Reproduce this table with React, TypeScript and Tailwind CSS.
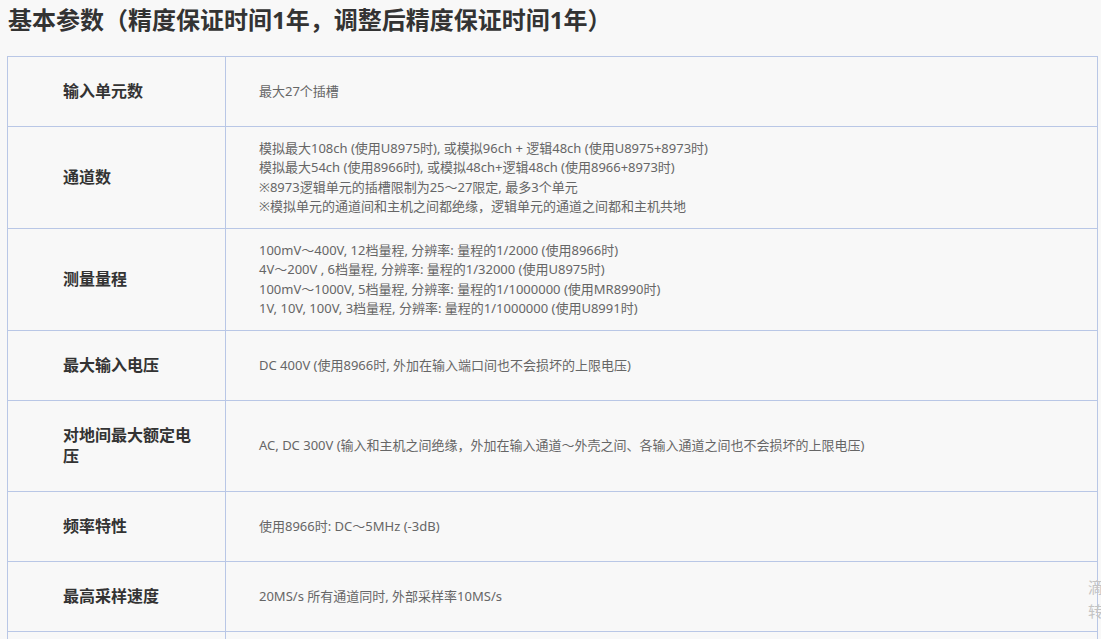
const rows: { name: string; lines: string[] }[] = [
  { name: "输入单元数", lines: ["最大27个插槽"] },
  {
    name: "通道数",
    lines: [
      "模拟最大108ch (使用U8975时), 或模拟96ch + 逻辑48ch (使用U8975+8973时)",
      "模拟最大54ch (使用8966时), 或模拟48ch+逻辑48ch (使用8966+8973时)",
      "※8973逻辑单元的插槽限制为25～27限定, 最多3个单元",
      "※模拟单元的通道间和主机之间都绝缘，逻辑单元的通道之间都和主机共地",
    ],
  },
  {
    name: "测量量程",
    lines: [
      "100mV～400V, 12档量程, 分辨率: 量程的1/2000 (使用8966时)",
      "4V～200V , 6档量程, 分辨率: 量程的1/32000 (使用U8975时)",
      "100mV～1000V, 5档量程, 分辨率: 量程的1/1000000 (使用MR8990时)",
      "1V, 10V, 100V, 3档量程, 分辨率: 量程的1/1000000 (使用U8991时)",
    ],
  },
  { name: "最大输入电压", lines: ["DC 400V (使用8966时, 外加在输入端口间也不会损坏的上限电压)"] },
  {
    name: "对地间最大额定电压",
    lines: ["AC, DC 300V (输入和主机之间绝缘，外加在输入通道～外壳之间、各输入通道之间也不会损坏的上限电压)"],
  },
  { name: "频率特性", lines: ["使用8966时: DC～5MHz (-3dB)"] },
  { name: "最高采样速度", lines: ["20MS/s 所有通道同时, 外部采样率10MS/s"] },
];

export default function App() {
  return (
    <div
      className="min-h-screen bg-[#f8f8f8] relative overflow-hidden"
      style={{ fontFamily: '"Noto Sans", "Noto Sans CJK SC", sans-serif' }}
    >
      <h2 className="pl-2 pt-[2px] text-[24px] leading-[36px] font-bold text-[#333]">
        基本参数（精度保证时间1年，调整后精度保证时间1年）
      </h2>

      <table className="ml-[7px] mt-[18px] w-[1091px] border-collapse">
        <tbody>
          {rows.map((r) => (
            <tr key={r.name}>
              <th className="w-[218px] border border-[#b9c7e6] pl-[55px] pr-[20px] py-6 text-left align-middle text-[16px] leading-[21px] font-bold text-[#333]">
                {r.name}
              </th>
              <td className="border border-[#b9c7e6] pl-[33px] pr-4 py-[11.5px] align-middle text-[13px] leading-[19.5px] text-[#666]">
                {r.lines.map((l, i) => (
                  <div key={i}>{l}</div>
                ))}
              </td>
            </tr>
          ))}
          <tr>
            <th className="h-[70px] border border-[#b9c7e6]"></th>
            <td className="h-[70px] border border-[#b9c7e6]"></td>
          </tr>
        </tbody>
      </table>

      <div className="absolute left-[1088px] top-[578px] flex flex-col gap-[6px] text-[15px] leading-[18px] text-[#c4c4c4]">
        <span>滴</span>
        <span>转</span>
      </div>
    </div>
  );
}
